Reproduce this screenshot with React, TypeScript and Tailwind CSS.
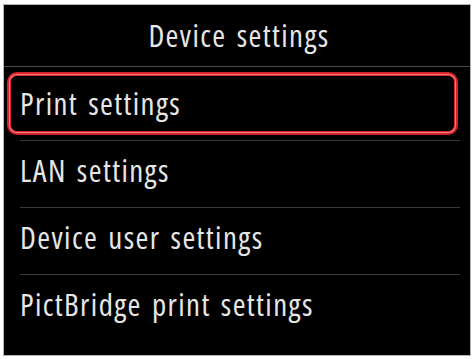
const items = ["LAN settings", "Device user settings", "PictBridge print settings"];

export default function App() {
  return (
    <div className="h-[359px] w-[473px] overflow-hidden bg-white pl-[3px] pt-[4px]">
      <div className="h-[352px] w-[468px] overflow-hidden border border-[#b4b4b4] bg-black font-['Open_Sans',sans-serif] text-[31px] font-medium leading-none tracking-[1.4px] [word-spacing:3px] text-[#e6e6e6] [font-stretch:condensed]">
        <div className="flex h-[62px] items-center justify-center border-b border-[#4a4a4a] pl-[4px]">
          Device settings
        </div>

        <div className="pl-[3px] pr-[12px] pt-[5px] pb-[5px]">
          <div className="rounded-[10px] border-2 border-[#d8222a] bg-[#ef8585] p-[1px]">
            <div className="flex h-[57px] items-center rounded-[7px] border border-[#d8222a] bg-black pl-[9px]">
              Print settings
            </div>
          </div>
        </div>

        <div className="pl-[16px] pr-[10px]">
          {items.map((label, i) => (
            <div
              key={label}
              className={
                i < items.length - 1
                  ? "h-[67px] border-t border-[#3a3a3a] pt-[14px]"
                  : "h-[80px] border-t border-[#3a3a3a] pt-[14px]"
              }
            >
              {label}
            </div>
          ))}
        </div>
      </div>
    </div>
  );
}
